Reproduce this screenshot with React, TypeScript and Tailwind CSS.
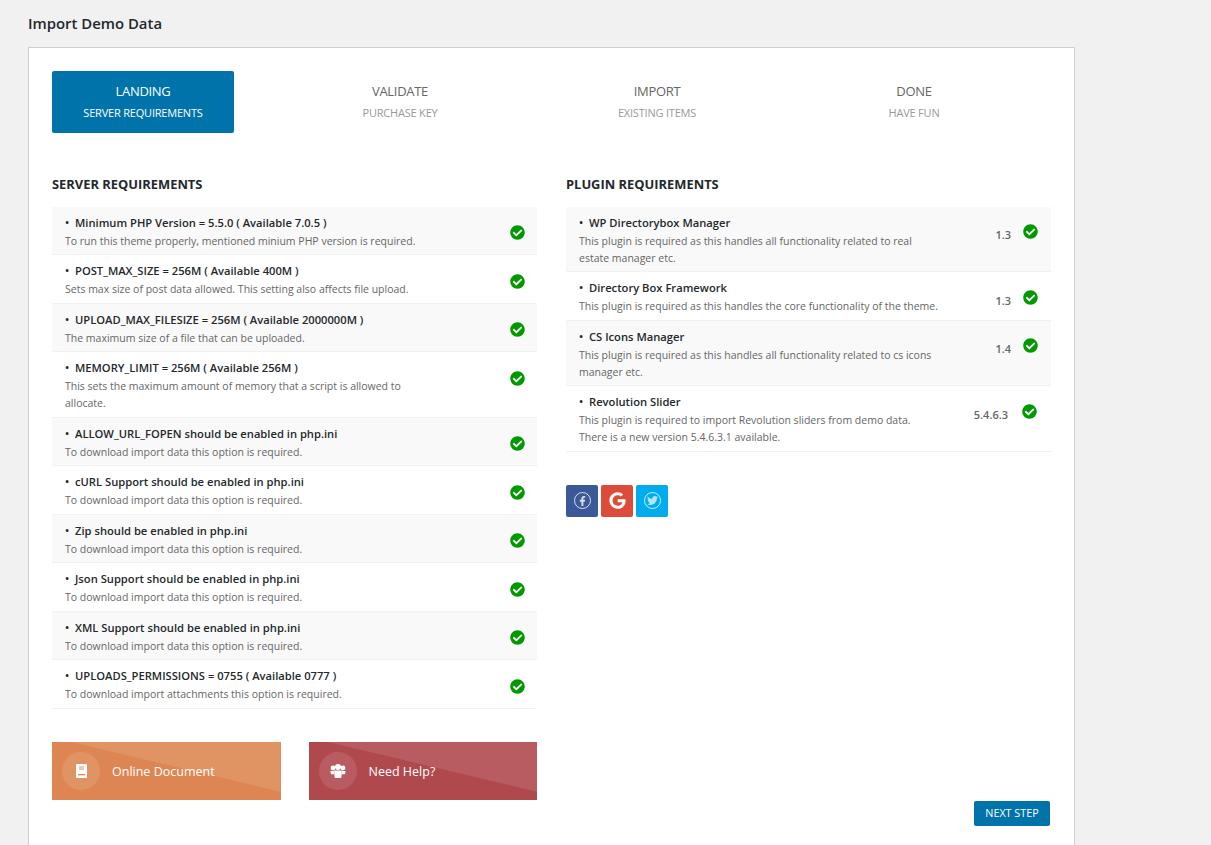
import { FaCheckCircle, FaGoogle, FaFacebookF, FaTwitter } from "react-icons/fa";

const steps = [
  { title: "LANDING", sub: "SERVER REQUIREMENTS", active: true },
  { title: "VALIDATE", sub: "PURCHASE KEY" },
  { title: "IMPORT", sub: "EXISTING ITEMS" },
  { title: "DONE", sub: "HAVE FUN" },
];

const server = [
  ["Minimum PHP Version = 5.5.0 ( Available 7.0.5 )", "To run this theme properly, mentioned minium PHP version is required."],
  ["POST_MAX_SIZE = 256M ( Available 400M )", "Sets max size of post data allowed. This setting also affects file upload."],
  ["UPLOAD_MAX_FILESIZE = 256M ( Available 2000000M )", "The maximum size of a file that can be uploaded."],
  ["MEMORY_LIMIT = 256M ( Available 256M )", "This sets the maximum amount of memory that a script is allowed to allocate."],
  ["ALLOW_URL_FOPEN should be enabled in php.ini", "To download import data this option is required."],
  ["cURL Support should be enabled in php.ini", "To download import data this option is required."],
  ["Zip should be enabled in php.ini", "To download import data this option is required."],
  ["Json Support should be enabled in php.ini", "To download import data this option is required."],
  ["XML Support should be enabled in php.ini", "To download import data this option is required."],
  ["UPLOADS_PERMISSIONS = 0755 ( Available 0777 )", "To download import attachments this option is required."],
];

const plugins = [
  { name: "WP Directorybox Manager", desc: ["This plugin is required as this handles all functionality related to real estate manager etc."], version: "1.3" },
  { name: "Directory Box Framework", desc: ["This plugin is required as this handles the core functionality of the theme."], version: "1.3" },
  { name: "CS Icons Manager", desc: ["This plugin is required as this handles all functionality related to cs icons manager etc."], version: "1.4" },
  { name: "Revolution Slider", desc: ["This plugin is required to import Revolution sliders from demo data.", "There is a new version 5.4.6.3.1 available."], version: "5.4.6.3", wide: true },
];

function Heading({ children }: { children: string }) {
  return <h2 className="text-[12.9px] font-bold leading-[18px] text-[#23282d] mb-[13.75px]">{children}</h2>;
}

function RowTitle({ children }: { children: string }) {
  return (
    <p className="flex text-[11.2px] font-semibold leading-[18px] mb-[1px] text-[#23282d]">
      <span className="w-[10px]">•</span>
      <span>{children}</span>
    </p>
  );
}

function BookIcon() {
  return (
    <svg width="11" height="14" viewBox="0 0 11 14">
      <rect width="11" height="14" rx="1" fill="#fff" />
      <rect x="3" y="2" width="5" height="4" fill="#de8653" opacity="0.45" />
      <rect x="2" y="10" width="7" height="1.3" fill="#de8653" />
    </svg>
  );
}

function UsersIcon() {
  return (
    <svg width="16" height="14" viewBox="0 0 16 14" fill="#fff">
      <circle cx="3" cy="4" r="2.4" />
      <circle cx="13" cy="4" r="2.4" />
      <circle cx="8" cy="3" r="3" />
      <path d="M0.5 7h3.3l0.7 3.2H1.2C0.6 9.6 0.5 8 0.5 7zM15.5 7h-3.3l-0.7 3.2h3.3C15.4 9.6 15.5 8 15.5 7z" />
      <path d="M4.2 6.5h7.6l-0.3 6.2c0 0.7-0.6 1.3-1.3 1.3H5.8c-0.7 0-1.3-0.6-1.3-1.3z" />
    </svg>
  );
}

function Banner({ label, bg, light, icon }: { label: string; bg: string; light: string; icon: React.ReactNode }) {
  return (
    <a className={`relative flex items-center w-[229px] h-[58px] pl-[10px] text-[12.5px] text-white overflow-hidden ${bg}`}>
      <span className={`absolute inset-0 [clip-path:polygon(8%_0,100%_0,100%_86%)] ${light}`} />
      <span className={`relative flex items-center justify-center w-[38px] h-[38px] rounded-full ${light}`}>{icon}</span>
      <span className="relative ml-[12px] mt-[3px]">{label}</span>
    </a>
  );
}

export default function App() {
  return (
    <div className="h-[845px] overflow-hidden bg-[#f1f1f1] font-['Open_Sans',sans-serif] pl-[28px]">
      <h1 className="pt-[13px] h-[47px] text-[14.9px] font-semibold leading-[20px] text-[#23282d]">Import Demo Data</h1>
      <div className="w-[1047px] border border-[#ccd0d4] bg-white px-[23px] pt-[23px] pb-[40px]">
        <div className="flex gap-[75px]">
          {steps.map((s) => (
            <div
              key={s.title}
              className={`w-[182px] h-[62px] rounded-[2px] flex flex-col items-center pt-[11px] ${s.active ? "bg-[#0073aa] text-white" : "text-[#666]"}`}
            >
              <span className="text-[13px] leading-[18px] tracking-[-0.3px]">{s.title}</span>
              <span className={`text-[11px] leading-[16px] mt-[5px] tracking-[-0.2px] ${s.active ? "text-white" : "text-[#999]"}`}>{s.sub}</span>
            </div>
          ))}
        </div>

        <div className="flex gap-[29px] mt-[42px]">
          <div className="w-[485px]">
            <Heading>SERVER REQUIREMENTS</Heading>
            <ul>
              {server.map(([title, desc], i) => (
                <li
                  key={title}
                  className={`flex justify-between pl-[13px] pr-[12px] pt-[7px] pb-[4.5px] border-b border-[#f1f1f1] ${i % 2 === 0 ? "bg-[#f9f9f9]" : "bg-white"}`}
                >
                  <div className="w-[370px]">
                    <RowTitle>{title}</RowTitle>
                    <p className="text-[10.5px] leading-[17px] text-[#666]">{desc}</p>
                  </div>
                  <FaCheckCircle className="text-[#009900] w-[15px] h-[15px] mt-[11.25px]" />
                </li>
              ))}
            </ul>
            <div className="flex gap-[28px] mt-[33px]">
              <Banner label="Online Document" bg="bg-[#de8653]" light="bg-[#e19463]" icon={<BookIcon />} />
              <Banner label="Need Help?" bg="bg-[#b0494e]" light="bg-[#b95c61]" icon={<UsersIcon />} />
            </div>
          </div>

          <div className="w-[485px]">
            <Heading>PLUGIN REQUIREMENTS</Heading>
            <ul>
              {plugins.map((p, i) => (
                <li
                  key={p.name}
                  className={`flex pl-[13px] pt-[7px] pb-[4.5px] border-b border-[#f1f1f1] ${i % 2 === 0 ? "bg-[#f9f9f9]" : "bg-white"}`}
                >
                  <div className="w-[363px]">
                    <RowTitle>{p.name}</RowTitle>
                    {p.desc.map((d) => (
                      <p key={d} className="text-[10.5px] leading-[17px] text-[#666]">{d}</p>
                    ))}
                  </div>
                  <div className={`flex flex-1 justify-end ${p.wide ? "pr-[14px]" : "pr-[13px]"}`}>
                    <span className="text-[11px] font-semibold leading-[18px] mt-[12.5px] text-[#666]">{p.version}</span>
                    <FaCheckCircle className={`text-[#009900] w-[15px] h-[15px] mt-[10.5px] ${p.wide ? "ml-[14px]" : "ml-[12px]"}`} />
                  </div>
                </li>
              ))}
            </ul>
            <div className="flex gap-[3px] mt-[33px]">
              <a className="flex items-center justify-center w-[32px] h-[32px] rounded-[2px] bg-[#3b5998]">
                <span className="flex items-center justify-center w-[17px] h-[17px] rounded-full border border-white/80">
                  <FaFacebookF className="text-white/80 w-[9px] h-[10px]" />
                </span>
              </a>
              <a className="flex items-center justify-center w-[32px] h-[32px] rounded-[2px] bg-[#dd4b39]">
                <FaGoogle className="text-white w-[17px] h-[17px]" />
              </a>
              <a className="flex items-center justify-center w-[32px] h-[32px] rounded-[2px] bg-[#00aced]">
                <span className="flex items-center justify-center w-[17px] h-[17px] rounded-full border border-white/80">
                  <FaTwitter className="text-white/70 w-[11px] h-[11px]" />
                </span>
              </a>
            </div>
          </div>
        </div>

        <div className="flex justify-end mt-[1px] pr-[1px]">
          <button className="w-[76px] h-[25px] rounded-[2px] bg-[#0073aa] text-white text-[10.8px] font-medium">NEXT STEP</button>
        </div>
      </div>
    </div>
  );
}
